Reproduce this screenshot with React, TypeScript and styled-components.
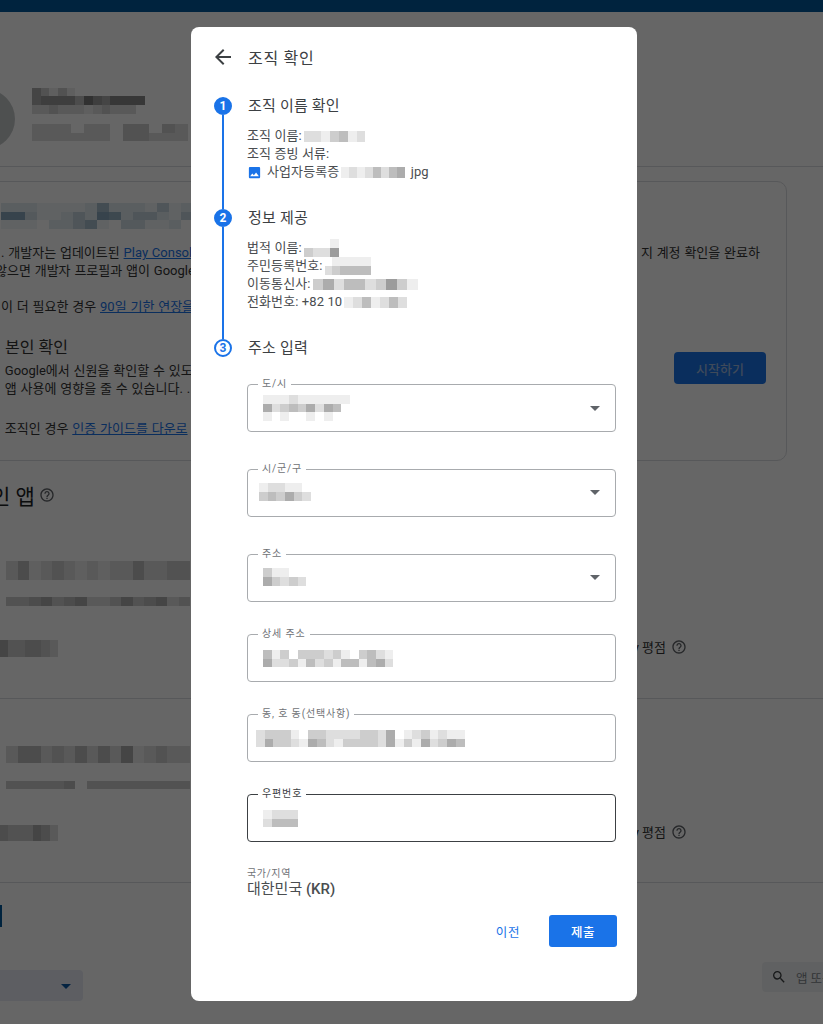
import React from "react";
import styled, { createGlobalStyle } from "styled-components";
import { MdArrowBack, MdArrowDropDown, MdImage, MdSearch, MdHelpOutline } from "react-icons/md";

const GlobalStyle = createGlobalStyle`
  html, body { margin: 0; padding: 0; background: #fff; }
  body { font-family: Roboto, "Noto Sans CJK KR", sans-serif; color: #3c4043; }
  * { box-sizing: border-box; }
`;

const Page = styled.div`
  position: relative;
  width: 823px;
  height: 1024px;
  overflow: hidden;
  background: #fff;
`;

/* ---------- pixelated redactions ---------- */

const MosaicBox = styled.span`
  display: inline-flex;
  flex-direction: column;
  vertical-align: middle;
  filter: blur(0.7px);
  flex: none;
`;

const MosaicRow = styled.span`
  display: flex;
`;

const Cell = styled.span<{ $v: number; $w: number; $h: number; $tint: string }>`
  display: block;
  width: ${(p) => p.$w}px;
  height: ${(p) => p.$h}px;
  background: rgba(${(p) => p.$tint}, ${(p) => p.$v * 0.065});
`;

type MosaicProps = { rows: string[]; w?: number; h?: number; tint?: string };

const Mosaic = ({ rows, w = 8.7, h = 8.7, tint = "0,0,0" }: MosaicProps) => (
  <MosaicBox>
    {rows.map((row, i) => (
      <MosaicRow key={i}>
        {row.split("").map((c, j) => (
          <Cell key={j} $v={Number(c)} $w={w} $h={h} $tint={tint} />
        ))}
      </MosaicRow>
    ))}
  </MosaicBox>
);

/* ---------- console page behind the dialog ---------- */

const Console = styled.div`
  display: flex;
  flex-direction: column;
  height: 1024px;
`;

const TopBar = styled.div`
  height: 12px;
  background: #01579b;
  flex: none;
`;

const Header = styled.div`
  height: 155px;
  display: flex;
  align-items: center;
  gap: 17px;
  border-bottom: 1px solid #dadce0;
  padding-top: 59px;
  flex: none;
`;

const Avatar = styled.div`
  width: 60px;
  height: 60px;
  margin-left: -45px;
  border-radius: 50%;
  background: #c4c7c9;
  flex: none;
`;

const HeaderText = styled.div`
  display: flex;
  flex-direction: column;
  gap: 10px;
  margin-bottom: 8px;
`;

const NoticeCard = styled.div`
  width: 807px;
  height: 280px;
  margin: 14px 0 0 -20px;
  padding: 21px 20px 0 20px;
  border: 1px solid #dadce0;
  border-radius: 10px;
  flex: none;
`;

const TextRow = styled.div<{ $top?: number; $shift?: number }>`
  display: flex;
  justify-content: space-between;
  margin-top: ${(p) => p.$top ?? 0}px;
  margin-left: ${(p) => p.$shift ?? 0}px;
  font-size: 13px;
  line-height: 18px;
  word-spacing: 0.6px;
  white-space: nowrap;
  color: #333;
`;

const BgLink = styled.a`
  color: #1a73e8;
  text-decoration: underline;
`;

const RightText = styled.span`
  margin-right: 6px;
`;

const Identity = styled.div`
  display: flex;
  justify-content: space-between;
  margin-top: 21px;
`;

const IdentityHead = styled.div`
  font-size: 16px;
  line-height: 22px;
  margin: 0 0 3px 4px;
  color: #333;
`;

const StartButton = styled.div`
  width: 92px;
  height: 32px;
  margin-top: 15px;
  border-radius: 4px;
  background: #1a73e8;
  color: #9db8e0;
  font-size: 13px;
  font-weight: 500;
  display: flex;
  align-items: center;
  justify-content: center;
`;

const AppsTitle = styled.div`
  display: flex;
  align-items: center;
  gap: 4px;
  height: 24px;
  margin: 22px 0 0 -9px;
  font-size: 21px;
  color: #202124;
  flex: none;
`;

const AppRow = styled.div<{ $height: number; $top: number }>`
  height: ${(p) => p.$height}px;
  padding-top: ${(p) => p.$top}px;
  border-bottom: 1px solid #dadce0;
  flex: none;
`;

const AppName = styled.div`
  display: flex;
  margin-left: 6px;
`;

const AppMeta = styled.div<{ $top: number }>`
  display: flex;
  margin: ${(p) => p.$top}px 0 0 6px;
`;

const AppStats = styled.div<{ $top: number }>`
  display: flex;
  justify-content: space-between;
  align-items: flex-start;
  margin-top: ${(p) => p.$top}px;
`;

const Rating = styled.div`
  display: flex;
  align-items: center;
  gap: 5px;
  margin: -3px 136px 0 0;
  font-size: 13px;
  color: #333;
`;

const BottomMark = styled.div`
  width: 2px;
  height: 22px;
  margin-top: 22px;
  background: #01579b;
  flex: none;
`;

const FilterBar = styled.div`
  display: flex;
  justify-content: space-between;
  align-items: flex-start;
  margin-top: 35px;
`;

const FilterSelect = styled.div`
  width: 83px;
  height: 31px;
  margin-top: 8px;
  padding-right: 5px;
  border-radius: 0 4px 4px 0;
  background: #e8eaf6;
  color: #0b57a4;
  display: flex;
  align-items: center;
  justify-content: flex-end;
`;

const SearchBox = styled.div`
  width: 61px;
  height: 30px;
  padding-left: 9px;
  border-radius: 4px 0 0 4px;
  background: #f1f3f4;
  color: #80868b;
  font-size: 12.5px;
  white-space: nowrap;
  overflow: hidden;
  display: flex;
  align-items: center;
  gap: 9px;
  svg { color: #3c4043; flex: none; }
`;

/* ---------- dialog ---------- */

const Scrim = styled.div`
  position: absolute;
  inset: 0;
  padding: 27px 186px 23px 191px;
  background: rgba(0, 0, 0, 0.6);
`;

const Dialog = styled.div`
  height: 974px;
  padding: 19px 21px 0 23px;
  border-radius: 8px;
  background: #fff;
  display: flex;
  flex-direction: column;
`;

const DialogHead = styled.div`
  display: flex;
  align-items: center;
  gap: 13px;
  height: 22px;
  margin: 0 0 29px -3px;
  font-size: 16px;
  letter-spacing: 0.7px;
  color: #3c4043;
  svg { color: #3c4043; flex: none; }
`;

const Step = styled.div`
  display: flex;
  gap: 16px;
`;

const Rail = styled.div`
  width: 18px;
  display: flex;
  flex-direction: column;
  align-items: center;
  flex: none;
`;

const Dot = styled.div<{ $outline?: boolean }>`
  width: 18px;
  height: 18px;
  border-radius: 50%;
  border: 2px solid #1a73e8;
  background: ${(p) => (p.$outline ? "#fff" : "#1a73e8")};
  color: ${(p) => (p.$outline ? "#1a73e8" : "#fff")};
  font-size: 12px;
  font-weight: 700;
  display: flex;
  align-items: center;
  justify-content: center;
  flex: none;
`;

const RailLine = styled.div`
  width: 2px;
  flex: 1;
  background: #1a73e8;
`;

const StepBody = styled.div<{ $pad: number }>`
  flex: 1;
  min-width: 0;
  padding-bottom: ${(p) => p.$pad}px;
`;

const StepTitle = styled.div`
  font-size: 15px;
  line-height: 18px;
  letter-spacing: 0.2px;
  color: #3c4043;
`;

const Details = styled.div`
  margin-top: 12px;
  margin-left: -1px;
  font-size: 13px;
  line-height: 18px;
  letter-spacing: 0.1px;
  color: #4a4d50;
`;

const DetailLine = styled.div`
  display: flex;
  align-items: center;
  height: 18px;
  gap: 2px;
  white-space: nowrap;
`;

const FileIcon = styled.span`
  display: inline-flex;
  color: #1a73e8;
  margin: 0 3px 0 0;
`;

const Fields = styled.div`
  margin-top: 21px;
  margin-left: -1px;
  display: flex;
  flex-direction: column;
`;

const Field = styled.fieldset<{ $focused?: boolean; $select?: boolean; $gap: number }>`
  height: 54px;
  margin: 0 0 ${(p) => p.$gap}px;
  padding: ${(p) => (p.$select ? 5 : 10)}px 14px 0 15px;
  min-width: 0;
  border: 1px solid ${(p) => (p.$focused ? "#3c4043" : "#a8abae")};
  border-radius: 4px;
  display: flex;
  align-items: center;
  justify-content: space-between;
`;

const FieldLabel = styled.legend<{ $focused?: boolean }>`
  margin-left: -5px;
  padding: 0 4px;
  height: 12px;
  font-size: 10px;
  line-height: 12px;
  letter-spacing: 0.85px;
  color: ${(p) => (p.$focused ? "#3c4043" : "#6f7276")};
`;

const FieldValue = styled.div<{ $shift?: number }>`
  margin-left: ${(p) => p.$shift ?? 0}px;
  display: flex;
`;

const Caret = styled.span`
  display: inline-flex;
  margin-right: -6px;
  color: #5f6368;
`;

const Country = styled.div`
  margin: 26px 0 0 -1px;
`;

const CountryLabel = styled.div`
  font-size: 10px;
  line-height: 12px;
  letter-spacing: 0.6px;
  color: #6f7276;
`;

const CountryValue = styled.div`
  font-size: 15px;
  line-height: 18px;
  color: #4a4d50;
  b { font-weight: 500; }
`;

const Actions = styled.div`
  display: flex;
  justify-content: flex-end;
  align-items: center;
  gap: 29px;
  margin: 17px -1px 0 0;
`;

const TextButton = styled.button`
  padding: 0;
  border: 0;
  background: none;
  font: inherit;
  font-size: 12.5px;
  letter-spacing: 0.6px;
  color: #1a73e8;
`;

const SubmitButton = styled.button`
  width: 68px;
  height: 32px;
  border: 0;
  border-radius: 3px;
  background: #1a73e8;
  color: #fff;
  font: inherit;
  font-size: 12.5px;
  font-weight: 500;
  letter-spacing: 0.6px;
`;

type FieldItem = {
  label: string;
  rows: string[];
  gap: number;
  select?: boolean;
  focused?: boolean;
  shift?: number;
};

const fields: FieldItem[] = [
  { label: "도/시", rows: ["1112111111", "5234352540", "1010010100"], gap: 31, select: true },
  { label: "시/군/구", rows: ["122110", "343532"], gap: 31, select: true, shift: -4 },
  { label: "주소", rows: ["31100", "53232"], gap: 26, select: true },
  { label: "상세 주소", rows: ["413033323103421", "522314231441452"], gap: 26 },
  { label: "동, 호 동(선택사항)", rows: ["233310332222332501231211", "253321542133332513152354"], gap: 26, shift: -7 },
  { label: "우편번호", rows: ["1222", "2444"], gap: 0, focused: true },
];

const App: React.FC = () => (
  <Page>
    <GlobalStyle />
    <Console>
      <TopBar />
      <Header>
        <Avatar />
        <HeaderText>
          <Mosaic rows={["5313100000000", "5666648657777", "2232221232220"]} />
          <Mosaic rows={["222022033032", "222222033222"]} w={13} />
        </HeaderText>
      </Header>
      <NoticeCard>
        <Mosaic
          w={12}
          tint="30,90,130"
          rows={["2221111262221412", "8831124287244214", "1110224610331120"]}
        />
        <TextRow $top={15}>
          <span>
            . 개발자는 업데이트된 <BgLink>Play Console</BgLink>
          </span>
          <RightText>지 계정 확인을 완료하</RightText>
        </TextRow>
        <TextRow $shift={-6}>않으면 개발자 프로필과 앱이 Google</TextRow>
        <TextRow $top={18}>
          <span>
            이 더 필요한 경우 <BgLink>90일 기한 연장을</BgLink>
          </span>
        </TextRow>
        <Identity>
          <div>
            <IdentityHead>본인 확인</IdentityHead>
            <TextRow>&nbsp;Google에서 신원을 확인할 수 있도</TextRow>
            <TextRow>&nbsp;앱 사용에 영향을 줄 수 있습니다. .</TextRow>
            <TextRow $top={22}>
              <span>
                &nbsp;조직인 경우 <BgLink>인증 가이드를 다운로</BgLink>
              </span>
            </TextRow>
          </div>
          <StartButton>시작하기</StartButton>
        </Identity>
      </NoticeCard>
      <AppsTitle>
        <span>인 앱</span>
        <MdHelpOutline size={16} color="#5f6368" />
      </AppsTitle>
      <AppRow $height={192} $top={54}>
        <AppName>
          <Mosaic rows={["2412321212242233"]} h={19} w={11.5} />
        </AppName>
        <AppMeta $top={17}>
          <Mosaic rows={["3345345223534523"]} h={9} w={11.5} />
        </AppMeta>
        <AppStats $top={34}>
          <Mosaic rows={["5334432"]} h={17} w={8.3} />
          <Rating>
            Play 평점 <MdHelpOutline size={16} color="#5f6368" />
          </Rating>
        </AppStats>
      </AppRow>
      <AppRow $height={184} $top={47}>
        <AppName>
          <Mosaic rows={["2442324242512322"]} h={17} w={11.5} />
        </AppName>
        <AppMeta $top={18}>
          <Mosaic rows={["3333340333333333"]} h={8} w={11.5} />
        </AppMeta>
        <AppStats $top={36}>
          <Mosaic rows={["4333542"]} h={16} w={8.3} />
          <Rating>
            Play 평점 <MdHelpOutline size={16} color="#5f6368" />
          </Rating>
        </AppStats>
      </AppRow>
      <BottomMark />
      <FilterBar>
        <FilterSelect>
          <MdArrowDropDown size={24} />
        </FilterSelect>
        <SearchBox>
          <MdSearch size={16} />앱 또는
        </SearchBox>
      </FilterBar>
    </Console>

    <Scrim>
      <Dialog>
        <DialogHead>
          <MdArrowBack size={24} />
          조직 확인
        </DialogHead>

        <Step>
          <Rail>
            <Dot>1</Dot>
            <RailLine />
          </Rail>
          <StepBody $pad={28}>
            <StepTitle>조직 이름 확인</StepTitle>
            <Details>
              <DetailLine>
                조직 이름: <Mosaic rows={["2213412"]} h={11} w={8.8} />
              </DetailLine>
              <DetailLine>조직 증빙 서류:</DetailLine>
              <DetailLine>
                <FileIcon>
                  <MdImage size={15} />
                </FileIcon>
                사업자등록증
                <Mosaic rows={["12124245"]} h={11} w={8} />
                <span>&nbsp;jpg</span>
              </DetailLine>
            </Details>
          </StepBody>
        </Step>

        <Step>
          <Rail>
            <Dot>2</Dot>
            <RailLine />
          </Rail>
          <StepBody $pad={28}>
            <StepTitle>정보 제공</StepTitle>
            <Details>
              <DetailLine>
                법적 이름: <Mosaic rows={["0001", "3226"]} h={9} />
              </DetailLine>
              <DetailLine>
                주민등록번호: <Mosaic rows={["011111", "234444"]} w={7.8} h={9} />
              </DetailLine>
              <DetailLine>
                이동통신사: <Mosaic rows={["3524423631"]} h={11} w={10.5} />
              </DetailLine>
              <DetailLine>
                전화번호: +82 10
                <Mosaic rows={["12412420"]} h={11} w={9} />
              </DetailLine>
            </Details>
          </StepBody>
        </Step>

        <Step>
          <Rail>
            <Dot $outline>3</Dot>
          </Rail>
          <StepBody $pad={0}>
            <StepTitle>주소 입력</StepTitle>
            <Fields>
              {fields.map((f) => (
                <Field key={f.label} $focused={f.focused} $select={f.select} $gap={f.gap}>
                  <FieldLabel $focused={f.focused}>{f.label}</FieldLabel>
                  <FieldValue $shift={f.shift}>
                    <Mosaic rows={f.rows} />
                  </FieldValue>
                  {f.select && (
                    <Caret>
                      <MdArrowDropDown size={24} />
                    </Caret>
                  )}
                </Field>
              ))}
            </Fields>
            <Country>
              <CountryLabel>국가/지역</CountryLabel>
              <CountryValue>
                대한민국 <b>(KR)</b>
              </CountryValue>
            </Country>
            <Actions>
              <TextButton>이전</TextButton>
              <SubmitButton>제출</SubmitButton>
            </Actions>
          </StepBody>
        </Step>
      </Dialog>
    </Scrim>
  </Page>
);

export default App;
